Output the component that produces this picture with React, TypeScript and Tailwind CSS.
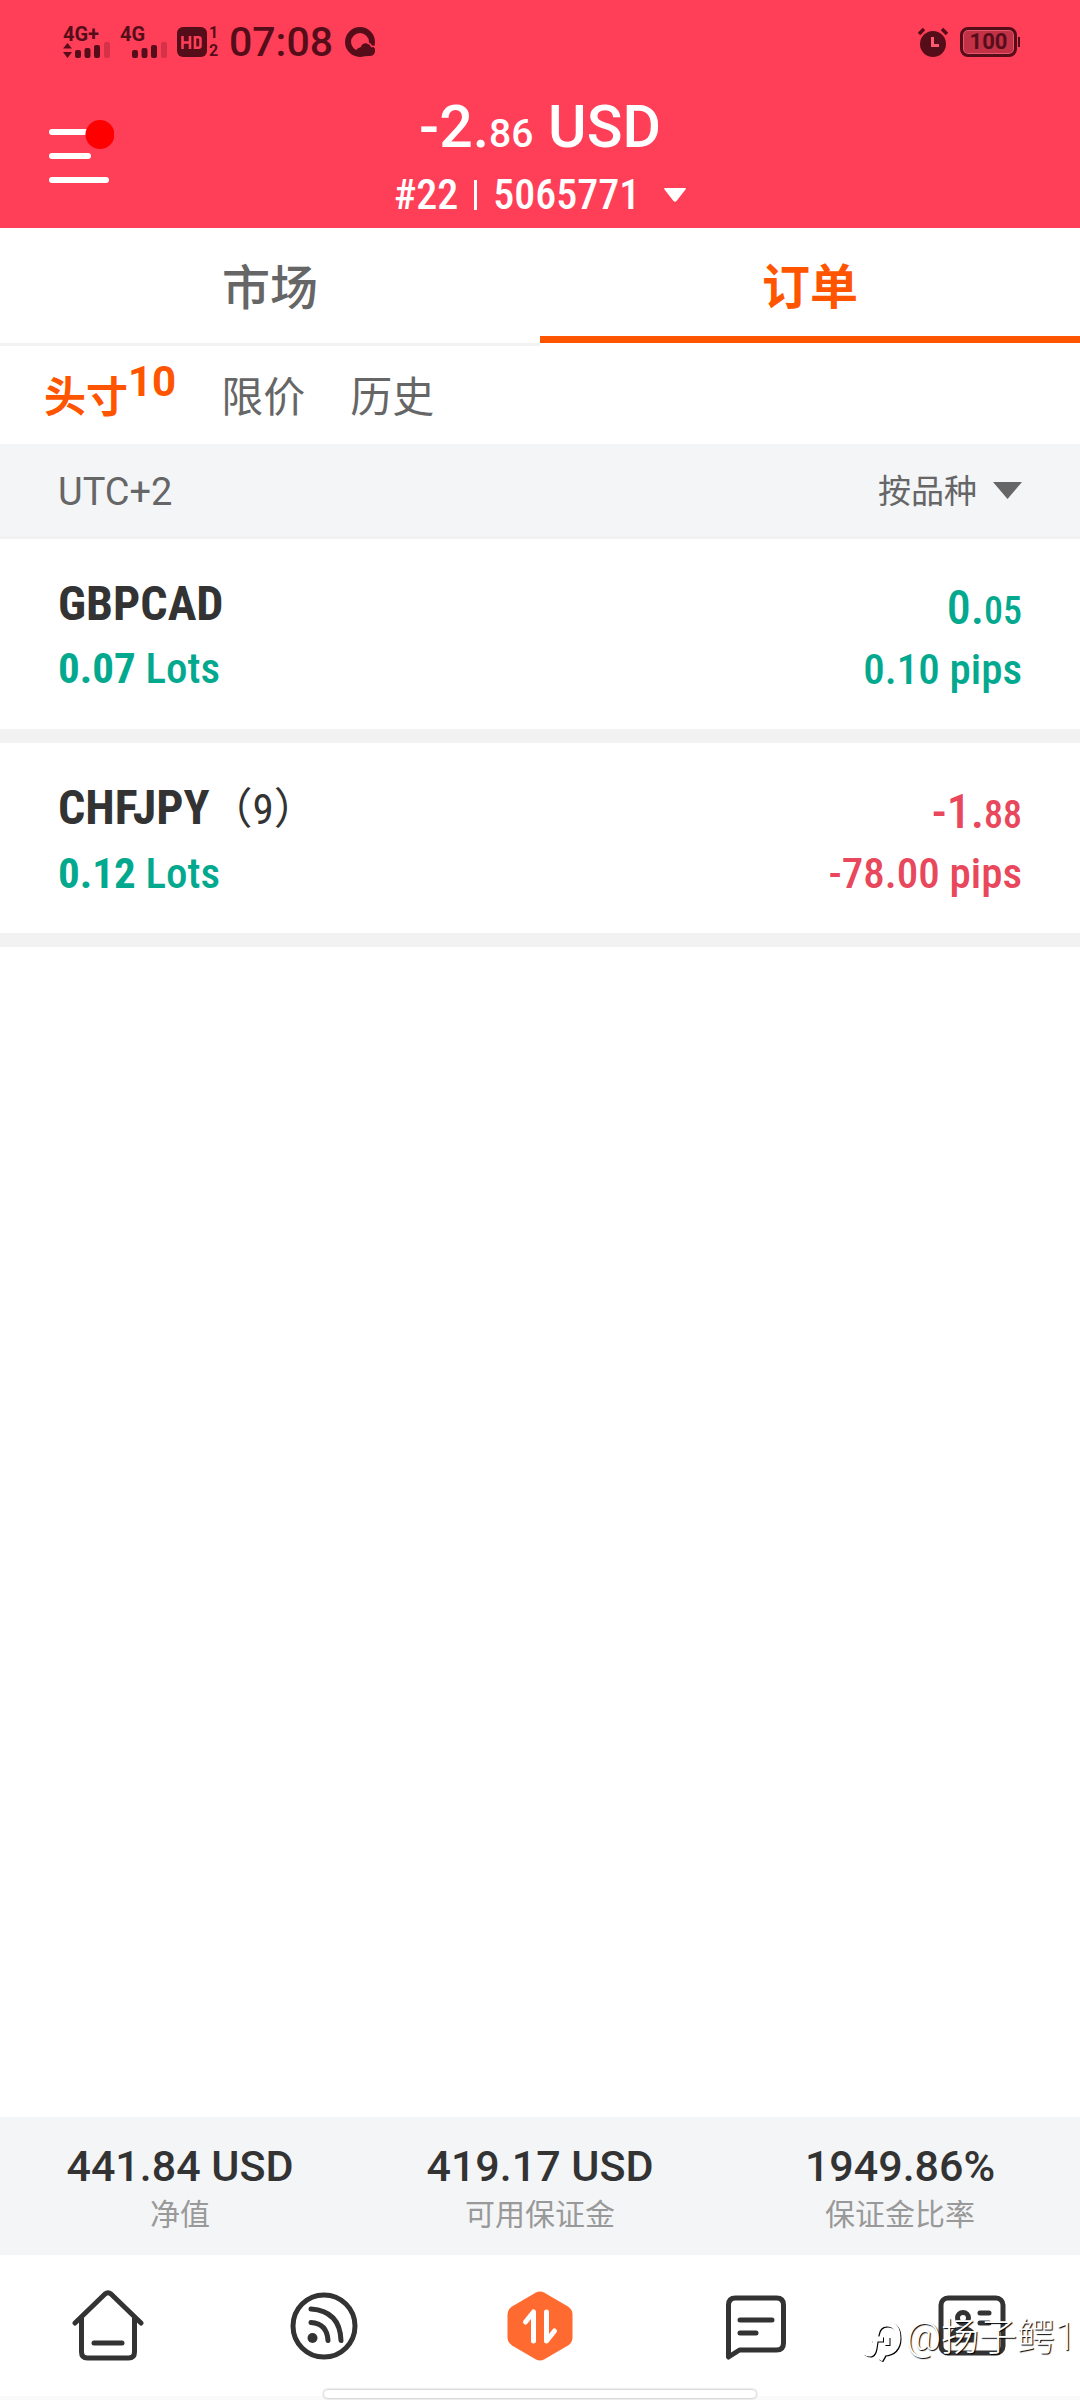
import { useState, type ReactNode } from 'react'
import clsx from 'clsx'

type Position = {
  symbol: string
  count?: number
  lots: string
  profit: [string, string]
  pips: string
  up: boolean
}

const positions: Position[] = [
  { symbol: 'GBPCAD', lots: '0.07', profit: ['0.', '05'], pips: '0.10 pips', up: true },
  { symbol: 'CHFJPY', count: 9, lots: '0.12', profit: ['-1.', '88'], pips: '-78.00 pips', up: false },
]

const summary = [
  { value: '441.84 USD', label: '净值' },
  { value: '419.17 USD', label: '可用保证金' },
  { value: '1949.86%', label: '保证金比率' },
]

const filters = [
  { id: 'open', label: '头寸', badge: 10 },
  { id: 'limit', label: '限价' },
  { id: 'history', label: '历史' },
]

const DIN = "font-['Roboto_Condensed',Roboto,'Noto_Sans_CJK_SC',sans-serif]"

function SignalBars({ updown = false }: { updown?: boolean }) {
  return (
    <svg width="47" height="16" viewBox="0 0 47 16" fill="currentColor" aria-hidden="true">
      {updown && <path d="M0 6.5 4.5 1 9 6.5zM0 10h9l-4.500 6z" />}
      <rect x="12" y="8" width="6" height="8" rx="2" />
      <rect x="21.500" y="6" width="6" height="10" rx="2" />
      <rect x="31" y="3" width="6" height="13" rx="2" />
      <rect x="41" y="0" width="6" height="16" rx="2" opacity="0.25" />
    </svg>
  )
}

function StatusBar() {
  return (
    <div className="flex h-[84px] items-center justify-between pr-[60px] pl-[63px] text-[#560d1a]">
      <div className="flex items-center">
        <div className="flex w-[57px] flex-col text-[20px] leading-[16px] font-bold">
          <span>4G+</span>
          <SignalBars updown />
        </div>
        <div className="flex w-[57px] flex-col text-[20px] leading-[16px] font-bold">
          <span>4G</span>
          <SignalBars />
        </div>
        <svg width="30" height="30" viewBox="0 0 30 30" aria-label="HD">
          <rect width="30" height="30" rx="6" fill="currentColor" />
          <path
            d="M5.500 9v13M13 9v13M5.500 15.500H13M18 10.300h3.500q2 0 2 2v6.400q0 2-2 2H18z"
            fill="none"
            stroke="#ff3f58"
            strokeWidth="2.600"
          />
        </svg>
        <div className="ml-0.5 flex w-5 flex-col text-[16px] leading-[18px] font-bold">
          <span>1</span>
          <span>2</span>
        </div>
        <span className="text-[41px] leading-[41px] font-medium">07:08</span>
        <svg className="ml-3" width="30" height="30" viewBox="0 0 30 30" fill="none" aria-hidden="true">
          <circle cx="15" cy="15" r="12" stroke="currentColor" strokeWidth="6" />
          <path
            d="M11 25c0-4 3-4 5-5 1-5 8-5 9 0 4-1 6 2 5 5s-3 4-5 4l-12 .5z"
            fill="currentColor"
          />
          <path d="M23 16c2 .5 3 2 3.500 3.500 1.500-.5 3 0 4 .5" stroke="#ff3f58" strokeWidth="1.500" />
        </svg>
      </div>
      <div className="flex items-center gap-3">
        <svg width="30" height="30" viewBox="0 0 30 30" fill="none" stroke="currentColor" aria-hidden="true">
          <circle cx="15" cy="17" r="13" fill="currentColor" stroke="none" />
          <path d="M1 7l5-5M29 7l-5-5" strokeWidth="3.500" />
          <path d="M14.500 10v8.500H21" stroke="#ff5a70" strokeWidth="3" />
        </svg>
        <div className="flex items-center">
          <div className="flex h-[30px] w-[57px] items-center justify-center rounded-lg border-3 border-current bg-[#c23146] text-[22px] leading-[24px] font-bold inset-ring inset-ring-[#e8566b]">
            100
          </div>
          <span className="ml-px h-2.5 w-0.5 bg-current" />
        </div>
      </div>
    </div>
  )
}

function Header() {
  return (
    <header className="bg-[#ff3f58] text-white">
      <StatusBar />
      <div className="grid h-[144px] grid-cols-[1fr_auto_1fr]">
        <button type="button" aria-label="菜单" className="ml-[46px] flex h-[132px] w-[68px] items-center">
          <svg width="68" height="66" viewBox="0 0 68 66" aria-hidden="true">
            <path
              d="M6 15h37M6 39h36M6 63h54"
              stroke="#fff"
              strokeWidth="6"
              strokeLinecap="round"
            />
            <circle cx="54" cy="17.500" r="14.500" fill="#f00" />
          </svg>
        </button>
        <div className="flex flex-col items-center pt-2">
          <p className="text-[59px] leading-[70px] font-medium">
            -2.<span className="text-[39px]">86</span> USD
          </p>
          <button
            type="button"
            aria-haspopup="listbox"
            className={clsx('flex items-center text-[42px] leading-[52px] font-medium', DIN)}
          >
            #22
            <span className="mx-4 h-[30px] w-[3px] bg-white" />
            5065771
            <svg className="ml-6" width="22" height="14" viewBox="0 0 22 14" fill="#fff" aria-hidden="true">
              <path d="M1 0h20q1.500 0 .5 1.500l-9 11.500q-1.500 1.500-3 0L.5 1.500Q-.5 0 1 0z" />
            </svg>
          </button>
        </div>
      </div>
    </header>
  )
}

function PositionRow({ position }: { position: Position }) {
  const tone = position.up ? 'text-[#03a98e]' : 'text-[#e8475c]'
  return (
    <li
      className={clsx(
        'flex h-[204px] justify-between border-b-14 border-[#f2f2f2] px-[58px] pt-8',
        DIN,
      )}
    >
      <div>
        <p className="text-[48px] leading-[66px] font-bold text-[#333]">
          {position.symbol}
          {position.count && <span className="text-[43px] font-normal">（{position.count}）</span>}
        </p>
        <p className="text-[43px] leading-[62px] font-medium text-[#03a98e]">
          <b>{position.lots}</b> Lots
        </p>
      </div>
      <div className={clsx('pt-1 text-right font-medium', tone)}>
        <p className="text-[48px] leading-[66px]">
          {position.profit[0]}
          <span className="text-[38px]">{position.profit[1]}</span>
        </p>
        <p className="text-[43px] leading-[50px]">{position.pips}</p>
      </div>
    </li>
  )
}

function NavLink({ label, children }: { label: string; children: ReactNode }) {
  return (
    <a href="#" aria-label={label} className="flex flex-1 items-center justify-center">
      <svg
        width="72"
        height="72"
        viewBox="0 0 72 72"
        fill="none"
        stroke="#333"
        strokeWidth="5"
        strokeLinecap="round"
        strokeLinejoin="round"
        aria-hidden="true"
      >
        {children}
      </svg>
    </a>
  )
}

function BottomNav() {
  return (
    <nav className="relative flex h-[145px] border-b-4 border-[#fafafa] bg-white">
      <NavLink label="首页">
        <path d="M3 33 33 4q3-2.500 6 0l30 29" />
        <path d="M9.500 28v34q0 6 6 6h41q6 0 6-6V28M22 53h28" />
      </NavLink>
      <NavLink label="动态">
        <circle cx="36" cy="36" r="31" />
        <circle cx="24.500" cy="48" r="5" fill="#333" stroke="none" />
        <path d="M23 32.500q16 1 17 18M23 19q29 2 30 31.500" />
      </NavLink>
      <NavLink label="交易">
        <path
          d="M32 2.500q4-2 8 0l24 14q4.500 3 4.500 8v23q0 5-4.500 8L40 69.500q-4 2-8 0L8 55.500q-4.500-3-4.500-8v-23q0-5 4.500-8z"
          fill="#ff6a30"
          stroke="none"
        />
        <path d="M21.500 32l8-10v29M42.500 22v29l8-10" stroke="#fff" />
      </NavLink>
      <NavLink label="消息">
        <path d="M8.500 67V15q0-7 7-7h41q7 0 7 7v38q0 7-7 7h-37zM20 30h32M20 43h16" />
      </NavLink>
      <NavLink label="账户">
        <rect x="5" y="8" width="62" height="55" rx="7" />
        <circle cx="27" cy="28" r="5.500" />
        <path d="M16 50q0-11 11-11t11 11zM44 23h9M44 33h9" />
      </NavLink>
      {/* 水印 */}
      <div className="absolute top-[57px] right-1 flex items-center gap-1 text-[38px] leading-[50px] font-light text-white [text-shadow:1px_1px_1px_#000]">
        <svg className="mt-2" width="38" height="42" viewBox="0 0 38 42" fill="none" aria-hidden="true">
          <path
            d="M2 33c5 4 8 2 9-4l2-13c1-8 5-11 11-11 8 0 11 6 11 14 0 10-6 15-14 15l-4 7M8 20h12M24 18v8"
            stroke="#000"
            strokeWidth="5"
          />
          <path
            d="M1 32c5 4 8 2 9-4l2-13c1-8 5-11 11-11 8 0 11 6 11 14 0 10-6 15-14 15l-4 7M7 19h12M23 17v8"
            stroke="#fff"
            strokeWidth="5"
          />
        </svg>
        <span>@扬子鳄1</span>
      </div>
      <span className="absolute -bottom-0.5 left-[30%] h-2 w-[40%] rounded-full bg-white shadow-[0_0_3px_#999]" />
    </nav>
  )
}

export default function App() {
  const [filter, setFilter] = useState('open')

  return (
    <div className="flex min-h-screen flex-col overflow-x-hidden bg-white font-[Roboto,'Noto_Sans_CJK_SC',sans-serif]">
      <Header />

      <div role="tablist" className="grid h-[118px] grid-cols-2 text-[48px]">
        <button
          type="button"
          role="tab"
          aria-selected="false"
          className="border-b-3 border-[#f2f2f2] pt-1.5 font-medium text-[#666]"
        >
          市场
        </button>
        <button
          type="button"
          role="tab"
          aria-selected="true"
          className="mb-[3px] border-b-7 border-[#ff5500] pt-3 font-bold text-[#ff5500]"
        >
          订单
        </button>
      </div>

      <div className="flex h-[98px] items-center gap-[45px] pt-1.5 pl-11 text-[42px] leading-[60px]">
        {filters.map((f) => (
          <button
            key={f.id}
            type="button"
            onClick={() => setFilter(f.id)}
            className={clsx('flex', filter === f.id ? 'font-bold text-[#ff5500]' : 'text-[#666]')}
          >
            {f.label}
            {f.badge && <span className="-mt-4">{f.badge}</span>}
          </button>
        ))}
      </div>

      <div className="flex h-[95px] items-center justify-between border-b-3 border-[#f2f2f2] bg-[#f4f5f7] px-[58px] pt-1 text-[#666]">
        <span className="text-[38px]">UTC+2</span>
        <label className="flex items-center gap-4">
          <select aria-label="排序" className="appearance-none bg-transparent text-[33px]">
            <option>按品种</option>
          </select>
          <svg className="mb-1" width="29" height="17" viewBox="0 0 29 17" fill="currentColor" aria-hidden="true">
            <path d="M0 0h29L14.500 17z" />
          </svg>
        </label>
      </div>

      <main className="flex-1">
        <ul>
          {positions.map((p) => (
            <PositionRow key={p.symbol} position={p} />
          ))}
        </ul>
      </main>

      <dl className="grid h-[138px] grid-cols-3 bg-[#f4f5f7] pt-6 text-center">
        {summary.map((s) => (
          <div key={s.label} className="flex flex-col-reverse justify-end">
            <dt className="text-[30px] leading-[48px] text-[#999]">{s.label}</dt>
            <dd className="text-[43px] leading-[50px] font-medium text-[#333]">{s.value}</dd>
          </div>
        ))}
      </dl>

      <BottomNav />
    </div>
  )
}
